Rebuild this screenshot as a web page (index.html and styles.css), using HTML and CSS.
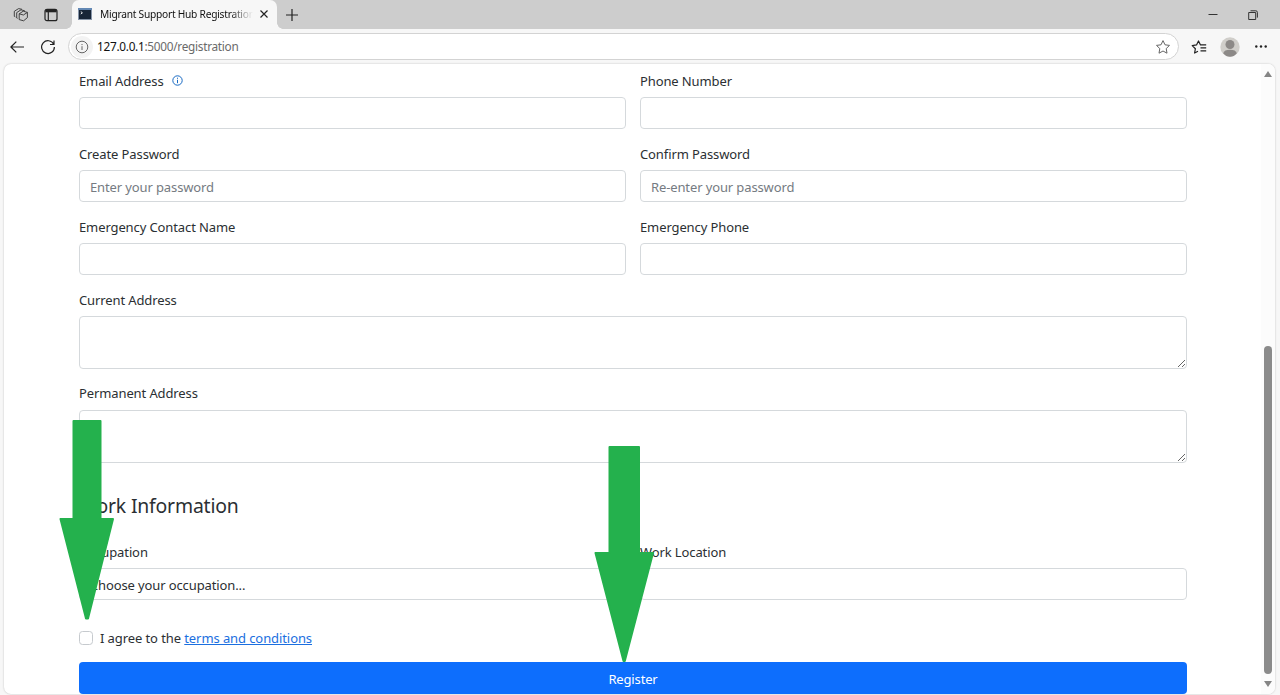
FILE: index.html
```html
<!DOCTYPE html>
<html lang="en">
<head>
<meta charset="utf-8">
<title>Migrant Support Hub Registration</title>
<link rel="stylesheet" href="styles.css">
</head>
<body>
<div class="browser">
  <header class="tabstrip">
    <svg class="icon workspaces" width="16" height="16" viewBox="0 0 16 16"><path d="M6.2 6.8 10.2 4.2 14.4 5.4V10.6L10.6 13.8 6.2 12.6ZM6.2 6.8 10.4 8 14.4 5.4M4.6 11.4 3.7 11V5.6L8 2.8 11.8 3.8M2.3 9.8 1.3 9.3V4.3L5.6 1.6 9 2.3"/></svg>
    <svg class="icon tabactions" width="14" height="14" viewBox="0 0 14 14"><rect x="1" y="1.3" width="12" height="11.4" rx="2"/><path d="M1.4 2.9H12.6" stroke-width="2.8"/><path d="M4.3 4V12.5"/></svg>
    <div class="tab">
      <svg class="favicon" width="14" height="12" viewBox="0 0 14 12"><rect width="14" height="12" fill="#8795a8"/><rect x="1" y="2" width="12" height="9" fill="#182638"/><rect width="14" height="2" fill="#6388b4"/><path d="M2.8 3.6 4.4 4.8 2.8 6" fill="none" stroke="#fff" stroke-width=".9"/></svg>
      <span class="tab-title">Migrant Support Hub Registration</span>
      <svg class="icon close" width="10" height="10" viewBox="0 0 10 10"><path d="M1.5 1.5 8.5 8.5M8.5 1.5 1.5 8.5"/></svg>
    </div>
    <svg class="icon newtab" width="12" height="12" viewBox="0 0 12 12"><path d="M6 0V12M0 6H12"/></svg>
    <div class="window-controls">
      <svg class="icon" width="10" height="10" viewBox="0 0 10 10"><path d="M.5 4.5H9.5"/></svg>
      <svg class="icon" width="10" height="10" viewBox="0 0 10 10"><rect x=".7" y="2.5" width="7" height="7"/><path d="M2.5 .8H7.8Q9.4 .8 9.4 2.4V7.6"/></svg>
    </div>
  </header>

  <nav class="toolbar">
    <svg class="icon back" width="14" height="12" viewBox="0 0 14 12"><path d="M14 6H1M6.3 .6 .9 6 6.3 11.4"/></svg>
    <svg class="icon reload" width="16" height="16" viewBox="0 0 16 16"><path d="M13.7 5.2A6.4 6.4 0 1 0 14.4 8M14 1.5V5.5H10"/></svg>
    <div class="address">
      <span class="site-info"><svg class="icon" width="14" height="14" viewBox="0 0 14 14"><circle cx="7" cy="7" r="5.8"/><path d="M7 6.2V10M7 4V5.1"/></svg></span>
      <span class="url"><b>127.0.0.1</b>:5000/registration</span>
      <svg class="icon star" width="16" height="16" viewBox="0 0 16 16"><path d="M8 1.6 10 5.8 14.5 6.4 11.2 9.6 12 14.2 8 12 4 14.2 4.8 9.6 1.5 6.4 6 5.8Z"/></svg>
    </div>
    <svg class="icon favorites" width="16" height="16" viewBox="0 0 16 16"><path d="M7 12.2 3.6 14 4.4 9.7 1.2 6.6 5.5 5.9 7.5 2 9.5 5.9H15.2M9.5 8.9H15.2M9.5 11.8H15.2"/></svg>
    <svg class="avatar" width="20" height="20" viewBox="0 0 20 20"><circle cx="10" cy="10" r="9.7" fill="#d0ceca"/><circle cx="10" cy="7.5" r="4.5" fill="#8c8987"/><path d="M3.2 16.2Q4.2 12.8 10 12.8T16.8 16.2Q14 19.7 10 19.7T3.2 16.2Z" fill="#8c8987"/></svg>
    <svg class="more" width="14" height="4" viewBox="0 0 14 4"><circle cx="2.3" cy="1.5" r="1.2"/><circle cx="7" cy="1.5" r="1.2"/><circle cx="11.7" cy="1.5" r="1.2"/></svg>
  </nav>

  <div class="viewport">
    <main class="page">
      <form class="form">
        <div class="row">
          <div class="field"><label class="label">Email Address <svg class="info" width="11" height="11" viewBox="0 0 11 11"><circle cx="5.5" cy="5.5" r="4.7"/><path d="M5.5 4.8V8.2M5.5 2.7V3.8"/></svg></label><input class="control" type="text"></div>
          <div class="field"><label class="label">Phone Number</label><input class="control" type="text"></div>
        </div>
        <div class="row">
          <div class="field"><label class="label">Create Password</label><input class="control" type="password" placeholder="Enter your password"></div>
          <div class="field"><label class="label">Confirm Password</label><input class="control" type="password" placeholder="Re-enter your password"></div>
        </div>
        <div class="row">
          <div class="field"><label class="label">Emergency Contact Name</label><input class="control" type="text"></div>
          <div class="field"><label class="label">Emergency Phone</label><input class="control" type="text"></div>
        </div>
        <div class="field"><label class="label">Current Address</label><textarea class="control area"></textarea></div>
        <div class="field"><label class="label label-high">Permanent Address</label><textarea class="control area"></textarea></div>
        <h4 class="section-title">Work Information</h4>
        <div class="row">
          <div class="field"><label class="label">Occupation</label><select class="control select"><option>Choose your occupation...</option></select></div>
          <div class="field"><label class="label">Work Location</label><input class="control" type="text"></div>
        </div>
        <div class="agree"><input class="checkbox" type="checkbox"><span class="agree-text">I agree to the <a class="link" href="#">terms and conditions</a></span></div>
        <button class="register" type="button">Register</button>
      </form>
    </main>
    <div class="scrollbar">
      <svg width="10" height="8" viewBox="0 0 10 8"><path d="M5 1 9 7H1Z"/></svg>
      <div class="thumb"></div>
      <svg width="10" height="8" viewBox="0 0 10 8"><path d="M5 7 9 1H1Z"/></svg>
    </div>
  </div>
</div>
<svg class="arrow arrow-terms" width="56" height="202" viewBox="0 0 56 202"><path d="M14.5 2H41.5V100H54L29 199.5H27L1.5 100H14.5Z"/></svg>
<svg class="arrow arrow-register" width="62" height="218" viewBox="0 0 62 218"><path d="M16.5 2H46V108H60L31.8 216H30.5L2.5 108H16.5Z"/></svg>
</body>
</html>
```
FILE: styles.css
```css
* { box-sizing: border-box; }
body {
  margin: 0;
  overflow: hidden;
  font-family: "Noto Sans", "Open Sans", sans-serif;
  font-size: 13px;
  letter-spacing: -0.08px;
  color: #2b2f33;
}
svg { flex: none; display: block; }
.browser { display: flex; flex-direction: column; height: 695px; background: #f7f7f7; }
.icon { fill: none; stroke: #222; stroke-width: 1.2; stroke-linejoin: round; }

.tabstrip { display: flex; align-items: center; height: 29px; padding: 0 22px 0 13px; background: #cdcdcd; }
.workspaces { stroke: #333; stroke-width: 0.9; }
.tabactions { margin-left: 15px; }
.tab {
  position: relative;
  display: flex;
  align-items: center;
  width: 205px;
  height: 29px;
  margin-left: 14px;
  padding: 0 8px 1px 6px;
  background: #f7f7f7;
  border-radius: 7px 7px 0 0;
}
.tab::before, .tab::after { content: ""; position: absolute; bottom: 0; width: 6px; height: 6px; }
.tab::before { right: 100%; background: radial-gradient(circle at 0 0, transparent 5.5px, #f7f7f7 6px); }
.tab::after { left: 100%; background: radial-gradient(circle at 100% 0, transparent 5.5px, #f7f7f7 6px); }
.tab-title {
  width: 154px;
  margin: 0 5px 0 8px;
  padding-bottom: 1px;
  white-space: nowrap;
  font-size: 10.2px;
  letter-spacing: -0.24px;
  color: #111;
  -webkit-mask-image: linear-gradient(90deg, #000 130px, transparent 153px);
  mask-image: linear-gradient(90deg, #000 130px, transparent 153px);
}
.newtab { margin-left: 9px; }
.window-controls { display: flex; gap: 30px; margin-left: auto; }
.window-controls .icon { stroke: #333; stroke-width: 1; }

.toolbar { display: flex; align-items: center; height: 35px; padding: 0 12px 0 10px; }
.reload { margin-left: 16px; }
.address {
  display: flex;
  align-items: center;
  width: 1111px;
  height: 27px;
  margin-left: 12px;
  padding: 0 7px 0 2px;
  background: #fff;
  border: 1px solid #d3d3d3;
  border-radius: 14px;
}
.site-info { display: grid; place-items: center; width: 22px; height: 22px; border-radius: 50%; background: #f3f3f3; }
.site-info .icon, .star { stroke: #666; stroke-width: 1; }
.url { flex: 1; margin-left: 4px; padding-bottom: 2px; font-size: 11.8px; letter-spacing: -0.28px; color: #6a6a6a; }
.url b { font-weight: 400; color: #111; }
.favorites { margin-left: 12px; }
.avatar { margin-left: 13px; }
.more { margin-left: auto; fill: #222; }

.viewport {
  display: flex;
  width: 1271px;
  height: 630px;
  margin: 0 0 0 4px;
  background: #fff;
  border-radius: 7px;
  box-shadow: 0 0 2px #bbb;
  overflow: hidden;
}
.page { flex: 1; padding: 6px 74px 0 75px; }
.form { display: flex; flex-direction: column; }
.row { display: grid; grid-template-columns: 1fr 1fr; gap: 14px; }
.field { display: flex; flex-direction: column; margin-bottom: 14px; }
.label { display: flex; align-items: center; gap: 8px; height: 20px; margin-bottom: 7px; padding-top: 1px; line-height: 20px; letter-spacing: -0.11px; }
.label-high { padding-top: 0; }
.info { fill: none; stroke: #1769c2; }
.control {
  display: block;
  width: 100%;
  height: 32px;
  margin: 0;
  padding: 1px 10px 0;
  font: inherit;
  letter-spacing: -0.12px;
  color: #2b2f33;
  background: #fff;
  border: 1px solid #d5d9dc;
  border-radius: 4px;
}
.control::placeholder { color: #757b82; opacity: 1; }
.area { height: 53px; resize: vertical; }
.select { appearance: none; }
.section-title { margin: 16px 0 22px; font-size: 19.4px; line-height: 26px; font-weight: 400; letter-spacing: -0.18px; }
.agree { display: flex; align-items: center; height: 20px; margin: 14px 0; gap: 7px; }
.checkbox { appearance: none; width: 14px; height: 14px; margin: 0; border: 1px solid #c6cace; border-radius: 3.5px; }
.agree-text { letter-spacing: -0.09px; }
.link { color: #1b6fe0; text-decoration: underline; }
.register { height: 32px; padding: 1px 0 0; border: 0; border-radius: 4px; background: #0d6efd; color: #fff; font: inherit; letter-spacing: -0.15px; }

.scrollbar { display: flex; flex-direction: column; align-items: center; width: 14px; padding: 6px 0 6px; background: #fcfcfc; fill: #858585; }
.thumb { width: 8px; height: 328px; margin: auto 0 6px; border-radius: 4px; background: #8b8b8b; }

/* Callouts drawn over the page */
.arrow { position: absolute; fill: #24b14d; stroke: #24b14d; stroke-width: 2; stroke-linejoin: round; }
.arrow-terms { left: 59px; top: 419px; }
.arrow-register { left: 593px; top: 445px; }
```
